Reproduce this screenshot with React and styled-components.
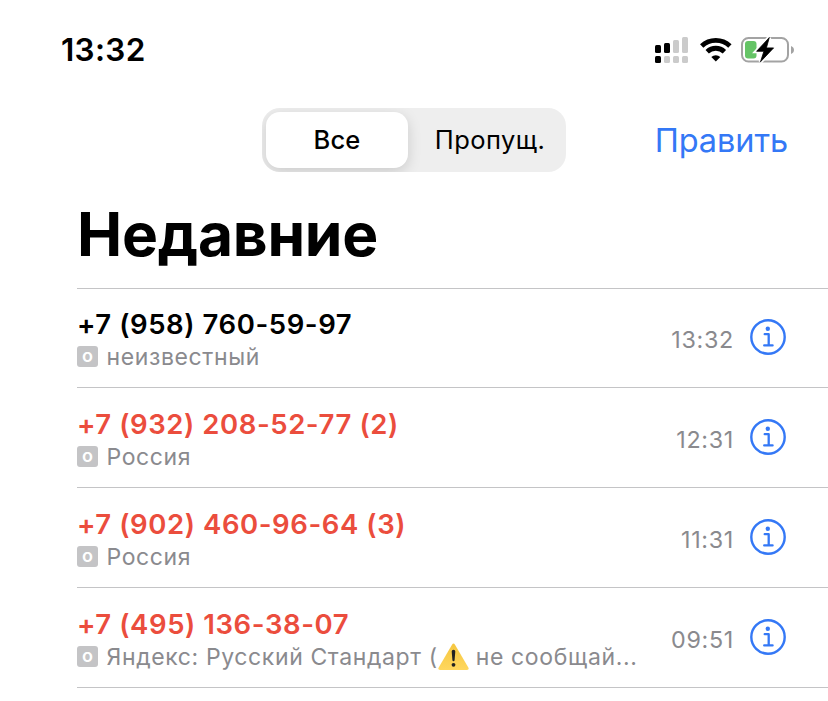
import React from 'react';
import styled, { createGlobalStyle } from 'styled-components';

const GlobalStyle = createGlobalStyle`
  * {
    box-sizing: border-box;
  }
  body {
    margin: 0;
    background: #fff;
    color: #000;
    font-family: Inter, 'Liberation Sans', sans-serif;
    overflow: hidden;
  }
`

const Page = styled.div`
  width: 828px;
  height: 701px;
  overflow: hidden;
  background: #fff;
`

const StatusBar = styled.header`
  display: flex;
  justify-content: space-between;
  align-items: center;
  height: 100px;
  padding: 0 33px 0 61px;
`

const Clock = styled.div`
  padding-bottom: 2px;
  font-size: 31.5px;
  font-weight: 600;
  letter-spacing: 0.3px;
`

const StatusIcons = styled.div`
  display: flex;
  align-items: center;
  svg {
    display: block;
  }
`

const Wifi = styled.svg`
  margin: 0 9px 0 11px;
`

const NavBar = styled.nav`
  display: flex;
  align-items: center;
  height: 64px;
  margin-top: 8px;
  padding: 0 40px 0 262px;
`

const Segmented = styled.div`
  display: flex;
  width: 304px;
  height: 64px;
  padding: 4px;
  border-radius: 18px;
  background: #eeeeee;
  overflow: hidden;
`

const Segment = styled.button`
  width: ${props => props.$active ? 142 : 154}px;
  height: 56px;
  padding: 0 0 2px ${props => props.$active ? 0 : 10}px;
  border: 0;
  border-radius: 14px;
  background: ${props => props.$active ? '#fff' : 'transparent'};
  box-shadow: ${props => props.$active ? '0 4px 14px rgba(0, 0, 0, 0.15)' : 'none'};
  color: #000;
  font-family: inherit;
  font-size: 25.5px;
  font-weight: ${props => props.$active ? 500 : 400};
  letter-spacing: ${props => props.$active ? 0.2 : 0.4}px;
`

const Edit = styled.button`
  margin-left: auto;
  padding: 0;
  border: 0;
  background: none;
  color: #3478f6;
  font-family: inherit;
  font-size: 32.5px;
  letter-spacing: -0.1px;
  white-space: nowrap;
`

const Title = styled.h1`
  height: 116px;
  margin: 0;
  padding: 24px 0 0 77px;
  font-size: 60.5px;
  font-weight: 700;
  line-height: 76px;
  letter-spacing: -0.25px;
`

const List = styled.ul`
  margin: 0 0 0 77px;
  padding: 0;
  list-style: none;
  border-top: 1px solid #c4c4c6;
`

const Row = styled.li`
  display: flex;
  height: ${props => props.$first ? 99 : 100}px;
  padding-top: ${props => props.$first ? 18 : 19}px;
  border-bottom: 1px solid #c4c4c6;
`

const Caller = styled.div`
  flex: 1;
  min-width: 0;
`

const Phone = styled.div`
  height: 34px;
  line-height: 34px;
  color: ${props => props.$missed ? '#eb4d3d' : '#000'};
  font-size: 27.5px;
  font-weight: 600;
  letter-spacing: 0.57px;
  white-space: nowrap;
`

const Label = styled.div`
  display: flex;
  align-items: center;
  height: 31px;
  color: #8a8a8e;
  font-size: 23px;
  letter-spacing: 0.62px;
  white-space: pre;
`

const Badge = styled.span`
  display: flex;
  align-items: center;
  justify-content: center;
  width: 21px;
  height: 21px;
  margin-right: 8.5px;
  padding-bottom: 2px;
  border-radius: 3px;
  background: #c4c4c6;
  color: #fff;
  font-size: 18px;
  font-weight: 600;
  line-height: 19px;
  letter-spacing: 0;
`

const Time = styled.div`
  height: 32px;
  margin-top: 17px;
  line-height: 32px;
  color: #8a8a8e;
  font-size: 23.3px;
  letter-spacing: 0.7px;
`

const InfoButton = styled.button`
  width: 36px;
  height: 36px;
  margin: 12px 42px 0 16px;
  padding: 0;
  border: 0;
  background: none;
  svg {
    display: block;
  }
`

const calls = [
  { phone: '+7 (958) 760-59-97', label: 'неизвестный', time: '13:32' },
  { phone: '+7 (932) 208-52-77 (2)', label: 'Россия', time: '12:31', missed: true },
  { phone: '+7 (902) 460-96-64 (3)', label: 'Россия', time: '11:31', missed: true },
  { phone: '+7 (495) 136-38-07', label: 'Яндекс: Русский Стандарт (', rest: ' не сообщай...', time: '09:51', missed: true },
]

const SignalIcon = () => (
  <svg width="34" height="26" viewBox="0 0 34 26">
    <rect x="0" y="8" width="6" height="8" rx="1.5" />
    <rect x="9" y="6" width="6" height="10" rx="1.5" />
    <rect x="18" y="3" width="6" height="13" rx="1.5" fill="#cbcbcb" />
    <rect x="27" y="0" width="6" height="16" rx="1.5" fill="#cbcbcb" />
    <rect x="0" y="19" width="6" height="7" rx="1.5" />
    <rect x="9" y="19" width="6" height="7" rx="1.5" fill="#cbcbcb" />
    <rect x="18" y="19" width="6" height="7" rx="1.5" fill="#cbcbcb" />
    <rect x="27" y="19" width="6" height="7" rx="1.5" fill="#cbcbcb" />
  </svg>
)

const WifiIcon = () => (
  <Wifi width="32" height="24" viewBox="0 0 32 24">
    <path d="M1.7 8.1a20.4 20.4 0 0 1 28.2 0" fill="none" stroke="#000" strokeWidth="4.8" />
    <path d="M7.2 13.7a12.4 12.4 0 0 1 17.2 0" fill="none" stroke="#000" strokeWidth="4.8" />
    <path d="M11.3 18.9a6.6 6.6 0 0 1 9 0L15.8 23.4z" />
  </Wifi>
)

const BatteryIcon = () => (
  <svg width="54" height="26" viewBox="0 0 54 26">
    <rect x="1" y="1" width="46" height="23.5" rx="6.5" fill="none" stroke="#a3a3a3" strokeWidth="2" />
    <path d="M50 9v8c1.8-.7 3-2.2 3-4s-1.2-3.3-3-4z" fill="#a3a3a3" />
    <rect x="4" y="4" width="11.5" height="17.5" rx="3" fill="#65c466" />
    <path d="M28.3 0.5 15.6 14.3h7.3L19.5 24.8 32.600 10.900h-7.200z" stroke="#fff" strokeWidth="4" />
    <path d="M28.3 0.5 15.6 14.3h7.3L19.5 24.8 32.600 10.900h-7.200z" stroke="#000" strokeWidth="0.8" strokeLinejoin="round" />
  </svg>
)

const InfoIcon = () => (
  <svg width="36" height="36" viewBox="0 0 36 36" fill="none" stroke="#3478f6">
    <circle cx="18" cy="18" r="16.7" strokeWidth="2.4" />
    <circle cx="17.8" cy="9.7" r="2.2" fill="#3478f6" stroke="none" />
    <path d="M14.7 15.2h4v11.2M14.2 26.400h8.400" strokeWidth="2.3" strokeLinecap="round" strokeLinejoin="round" />
  </svg>
)

const WarningIcon = () => (
  <svg width="31" height="28" viewBox="0 0 31 28">
    <defs>
      <linearGradient id="warn" x1="0" y1="0" x2="0" y2="1">
        <stop offset="0" stopColor="#f5c63f" />
        <stop offset="1" stopColor="#ffd75e" />
      </linearGradient>
    </defs>
    <path d="M14 1.700q1.500-2.400 3 0L30.300 24.500q1.200 2.500-1.300 2.500H2q-2.500 0-1.300-2.500z" fill="url(#warn)" />
    <path d="M13.700 8.500q0-1.700 1.800-1.700T17.300 8.500l-.7 8.500q-.1 1.300-1.100 1.300T14.400 17z" fill="#222" />
    <circle cx="15.500" cy="21.800" r="1.900" fill="#222" />
  </svg>
)

const App = () => (
  <>
    <GlobalStyle />
    <Page>
      <StatusBar>
        <Clock>13:32</Clock>
        <StatusIcons>
          <SignalIcon />
          <WifiIcon />
          <BatteryIcon />
        </StatusIcons>
      </StatusBar>
      <NavBar>
        <Segmented>
          <Segment $active>Все</Segment>
          <Segment>Пропущ.</Segment>
        </Segmented>
        <Edit>Править</Edit>
      </NavBar>
      <Title>Недавние</Title>
      <List>
        {calls.map((call, i) => (
          <Row key={call.phone} $first={i === 0}>
            <Caller>
              <Phone $missed={call.missed}>{call.phone}</Phone>
              <Label>
                <Badge>о</Badge>
                <span>{call.label}</span>
                {call.rest && <WarningIcon />}
                {call.rest && <span>{call.rest}</span>}
              </Label>
            </Caller>
            <Time>{call.time}</Time>
            <InfoButton aria-label="info">
              <InfoIcon />
            </InfoButton>
          </Row>
        ))}
      </List>
    </Page>
  </>
)

export default App
